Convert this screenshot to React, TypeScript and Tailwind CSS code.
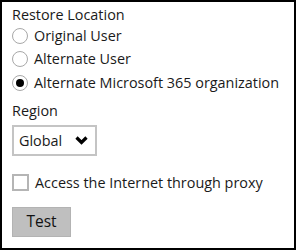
import { useState } from 'react';

const options = ['Original User', 'Alternate User', 'Alternate Microsoft 365 organization'];

function Radio({ checked }: { checked: boolean }) {
  return (
    <span className="w-[16px] h-[16px] rounded-full border border-[#a8a8a8] bg-white flex items-center justify-center shrink-0">
      {checked && <span className="w-[8px] h-[8px] rounded-full bg-black" />}
    </span>
  );
}

export default function App() {
  const [selected, setSelected] = useState(2);

  return (
    <div
      className="w-[296px] h-[250px] border-2 border-black bg-white text-[#1a1a1a] text-[14.4px] px-[10px] pt-[4px]"
      style={{ fontFamily: '"Open Sans", sans-serif' }}
    >
      {/* Restore location */}
      <div className="leading-[18px]">Restore Location</div>
      <div className="flex flex-col">
        {options.map((opt, i) => (
          <label
            key={opt}
            className="flex items-center gap-[6px] h-[23.5px] cursor-pointer"
            onClick={() => setSelected(i)}
          >
            <Radio checked={selected === i} />
            <span>{opt}</span>
          </label>
        ))}
      </div>

      {/* Region */}
      <div className="mt-[6.5px] leading-[20px]">Region</div>
      <div className="mt-[4px] w-[85px] h-[31px] border-2 border-[#c4c4c4] flex items-center justify-between pl-[5px] pr-[7px]">
        <span>Global</span>
        <svg width="13" height="9" viewBox="0 0 13 9">
          <path d="M1.5 1.5 L6.5 6.5 L11.5 1.5" fill="none" stroke="#000" strokeWidth="3.2" />
        </svg>
      </div>

      {/* Proxy */}
      <label className="mt-[18px] h-[17px] flex items-center gap-[6px]">
        <span className="w-[17px] h-[17px] border-2 border-[#b5b5b5] bg-white shrink-0" />
        <span>Access the Internet through proxy</span>
      </label>

      <button className="mt-[16px] w-[59px] h-[30px] bg-[#bfbfbf] border border-[#b3b3b3] text-[15.5px] text-[#111] flex items-center justify-center">
        Test
      </button>
    </div>
  );
}
